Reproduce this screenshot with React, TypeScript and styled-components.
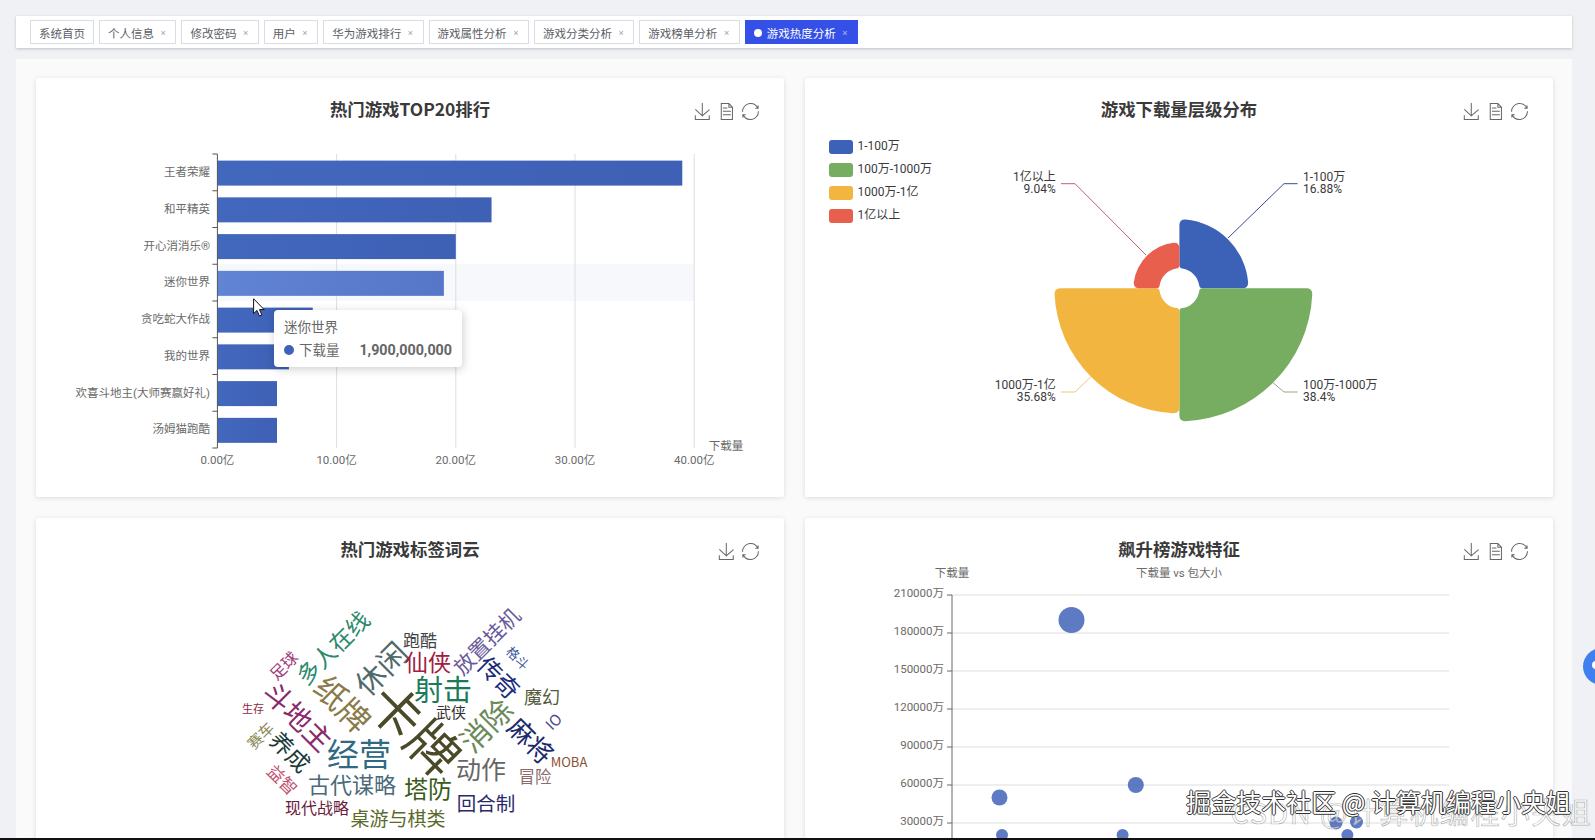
import styled, { createGlobalStyle } from "styled-components";

const FONT = `Roboto, "Noto Sans CJK SC", "Noto Sans", sans-serif`;

const GlobalStyle = createGlobalStyle`
  html, body {
    margin: 0;
    padding: 0;
    background: #eff1f4;
  }
  body {
    font-family: ${FONT};
  }
`;

const tabs = ["系统首页", "个人信息", "修改密码", "用户", "华为游戏排行", "游戏属性分析", "游戏分类分析", "游戏榜单分析", "游戏热度分析"];

const bars = [
  { name: "王者荣耀", value: 39 },
  { name: "和平精英", value: 23 },
  { name: "开心消消乐®", value: 20 },
  { name: "迷你世界", value: 19 },
  { name: "贪吃蛇大作战", value: 8 },
  { name: "我的世界", value: 6 },
  { name: "欢喜斗地主(大师赛赢好礼)", value: 5 },
  { name: "汤姆猫跑酷", value: 5 },
];

const legend = [
  { name: "1-100万", color: "#3c62b8" },
  { name: "100万-1000万", color: "#76ad60" },
  { name: "1000万-1亿", color: "#f2b640" },
  { name: "1亿以上", color: "#e85f4e" },
];

const words = [
  { t: "卡牌", x: 417, y: 727.5, s: 52, r: 45, c: "#4a4a28" },
  { t: "射击", x: 443, y: 688, s: 29, r: 0, c: "#1a7a5a" },
  { t: "经营", x: 359, y: 752, s: 32, r: 0, c: "#2f6a80" },
  { t: "休闲", x: 380, y: 667.5, s: 30, r: -45, c: "#4f6a6a" },
  { t: "纸牌", x: 344, y: 702.5, s: 32, r: 45, c: "#8a7a4a" },
  { t: "斗地主", x: 299, y: 715.5, s: 28, r: 45, c: "#8a2a6a" },
  { t: "多人在线", x: 332, y: 647, s: 23, r: -45, c: "#2a8a6a" },
  { t: "放置挂机", x: 486, y: 640.5, s: 21, r: -45, c: "#6a5a9a" },
  { t: "仙侠", x: 428, y: 661, s: 23, r: 0, c: "#a02040" },
  { t: "跑酷", x: 420, y: 639, s: 17, r: 0, c: "#444444" },
  { t: "传奇", x: 500, y: 676.5, s: 24, r: 45, c: "#1a2a7a" },
  { t: "格斗", x: 518, y: 657.5, s: 13, r: 45, c: "#3a5a9a" },
  { t: "魔幻", x: 542, y: 696, s: 18, r: 0, c: "#555a3a" },
  { t: "武侠", x: 451, y: 711, s: 15, r: 0, c: "#333333" },
  { t: "消除", x: 485, y: 724, s: 30, r: -45, c: "#6a8a5a" },
  { t: "麻将", x: 532, y: 739.5, s: 26, r: 45, c: "#1a2a6a" },
  { t: "IO", x: 553, y: 721, s: 15, r: -45, c: "#4a4a8a" },
  { t: "MOBA", x: 569, y: 761, s: 13, r: 0, c: "#8a5030" },
  { t: "动作", x: 481, y: 768, s: 25, r: 0, c: "#666666" },
  { t: "冒险", x: 535, y: 776, s: 16.5, r: 0, c: "#8a6a6a" },
  { t: "塔防", x: 428, y: 787, s: 24, r: 0, c: "#3a5a1a" },
  { t: "回合制", x: 486, y: 802, s: 19.5, r: 0, c: "#2a2a6a" },
  { t: "桌游与棋类", x: 398, y: 817, s: 19, r: 0, c: "#5a6a2a" },
  { t: "现代战略", x: 317, y: 807, s: 16, r: 0, c: "#6a1a3a" },
  { t: "古代谋略", x: 352, y: 783, s: 22, r: 0, c: "#4a6a7a" },
  { t: "益智", x: 283, y: 779, s: 17, r: 45, c: "#c05070" },
  { t: "养成", x: 291, y: 751, s: 23, r: 45, c: "#1a3a3a" },
  { t: "赛车", x: 260, y: 735, s: 15, r: -45, c: "#8a8a5a" },
  { t: "生存", x: 253, y: 708, s: 11, r: 0, c: "#8a2a4a" },
  { t: "足球", x: 283, y: 665, s: 16, r: -45, c: "#a03a7a" },
];

const points = [
  { x: 1071.5, y: 620, r: 13 },
  { x: 999.5, y: 797.5, r: 8 },
  { x: 1135.8, y: 785, r: 8 },
  { x: 1002, y: 835, r: 6 },
  { x: 1122.6, y: 835, r: 6 },
  { x: 1336, y: 823, r: 6.5 },
  { x: 1356.5, y: 822, r: 6.5 },
  { x: 1347.4, y: 835, r: 6 },
];

// ---- toolbox icons (60x60 grid)
const Tool = styled.svg`
  width: 17px;
  height: 17px;
  fill: none;
  stroke: #666;
  stroke-width: 3.6;
  display: block;
`;

const SaveIcon = () => (
  <Tool viewBox="0 0 60 60">
    <path d="M4.7,22.9L29.3,45.5L54.7,23.4M4.6,43.6L4.6,58L53.8,58L53.8,43.6M29.2,45.1L29.2,0" />
  </Tool>
);

const DataIcon = () => (
  <Tool viewBox="0 0 60 60">
    <path d="M17.5,17.3H33 M45.4,29.5h-28 M11.5,2v56H51V14.8L38.4,2H11.5z M38.4,2.2v12.7H51 M45.4,41.7h-28" />
  </Tool>
);

const RestoreIcon = () => (
  <Tool viewBox="0 0 60 60">
    <path d="M47,18.9h9.8V8.7 M56.3,20.1C52.1,9,40.5,0.6,26.8,2.1C12.6,3.7,1.6,16.2,2.1,30.6 M13,41.1H3.1v10.2 M3.7,39.9c4.2,11.1,15.8,19.5,29.5,18c14.2-1.6,25.2-14.1,24.7-28.5" />
  </Tool>
);

// ---- chart text
const AxisText = styled.text<{ $anchor?: string }>`
  font-family: ${FONT};
  font-size: 11.5px;
  fill: #6a6a6a;
  text-anchor: ${(p) => p.$anchor || "middle"};
  dominant-baseline: central;
`;

const DarkText = styled(AxisText)`
  font-size: 12px;
  fill: #3a3a3a;
`;

const Word = styled.text<{ $size: number; $color: string }>`
  font-family: "Noto Sans CJK SC", "Noto Sans", sans-serif;
  font-size: ${(p) => p.$size}px;
  fill: ${(p) => p.$color};
  text-anchor: middle;
  dominant-baseline: central;
`;

const ChartSvg = styled.svg`
  display: block;
  width: 748px;
  height: 379px;
`;

// the view boxes start at the card's place on the page, so the numbers below read as page pixels
const BarChart = () => {
  const x0 = 217.4;
  const unit = 11.92;
  const top = 154;
  const band = 36.75;
  return (
    <ChartSvg viewBox="36 118 748 379">
      <defs>
        <linearGradient id="barFill" x1="0" x2="1" y1="0" y2="0">
          <stop offset="0" stopColor="#4268be" />
          <stop offset="1" stopColor="#3e60b5" />
        </linearGradient>
        <linearGradient id="barHover" x1="0" x2="1" y1="0" y2="0">
          <stop offset="0" stopColor="#6284d4" />
          <stop offset="1" stopColor="#5676c8" />
        </linearGradient>
      </defs>
      <rect x={x0} y={top + band * 3} width={477} height={band} fill="#f6f8fb" />
      {[10, 20, 30, 40].map((v) => (
        <line key={v} x1={x0 + v * unit} x2={x0 + v * unit} y1={top} y2={448} stroke="#dedede" />
      ))}
      {bars.map((b, i) => (
        <g key={b.name}>
          <rect
            x={x0}
            y={top + band * i + 6.6}
            width={b.value * unit}
            height={25}
            fill={i === 3 ? "url(#barHover)" : "url(#barFill)"}
          />
          <AxisText x={210} y={top + band * i + 18} $anchor="end">
            {b.name}
          </AxisText>
        </g>
      ))}
      <line x1={x0} x2={x0} y1={top} y2={448} stroke="#555" />
      {bars.map((_, i) => (
        <line key={i} x1={x0 - 5} x2={x0} y1={top + band * i} y2={top + band * i} stroke="#555" />
      ))}
      <line x1={x0 - 5} x2={x0} y1={448} y2={448} stroke="#555" />
      {[0, 10, 20, 30, 40].map((v) => (
        <AxisText key={v} x={x0 + v * unit} y={460}>
          {v}.00亿
        </AxisText>
      ))}
      <AxisText x={726} y={446}>
        下载量
      </AxisText>
    </ChartSvg>
  );
};

const sector = (cx: number, cy: number, r0: number, r1: number, a0: number, a1: number, c: number, ci: number) => {
  const p = (r: number, a: number) => `${(cx + r * Math.sin(a)).toFixed(2)} ${(cy - r * Math.cos(a)).toFixed(2)}`;
  const dO = c / r1;
  const dI = ci / r0;
  return [
    `M${p(r1, a0 + dO)}`,
    `A${r1} ${r1} 0 0 1 ${p(r1, a1 - dO)}`,
    `Q${p(r1, a1)} ${p(r1 - c, a1)}`,
    `L${p(r0 + ci, a1)}`,
    `Q${p(r0, a1)} ${p(r0, a1 - dI)}`,
    `A${r0} ${r0} 0 0 0 ${p(r0, a0 + dI)}`,
    `Q${p(r0, a0)} ${p(r0 + ci, a0)}`,
    `L${p(r1 - c, a0)}`,
    `Q${p(r1, a0)} ${p(r1, a0 + dO)}Z`,
  ].join(" ");
};

const slices = [
  { r: 69, color: "#3c62b8", stroke: "#34508f", line: "1228,238 1284,183.7 1297.6,183.7", lx: 1303, ly: 177, anchor: "start", label: "1-100万", pct: "16.88%" },
  { r: 133, color: "#76ad60", stroke: "#9aa68c", line: "1273,382.7 1284,392 1297.6,392", lx: 1303, ly: 385, anchor: "start", label: "100万-1000万", pct: "38.4%" },
  { r: 125, color: "#f2b640", stroke: "#e9cc78", line: "1091,376.7 1075,392 1061,392", lx: 1055.8, ly: 385, anchor: "end", label: "1000万-1亿", pct: "35.68%" },
  { r: 46, color: "#e85f4e", stroke: "#c0606e", line: "1146,255 1075,183.7 1061,183.7", lx: 1055.8, ly: 177, anchor: "end", label: "1亿以上", pct: "9.04%" },
];

const PieChart = () => (
  <ChartSvg viewBox="805 118 748 379">
    {legend.map((l, i) => (
      <g key={l.name}>
        <rect x={829} y={140 + i * 23} width={24} height={14} rx={3} fill={l.color} />
        <DarkText x={857.5} y={145.5 + i * 23} $anchor="start">
          {l.name}
        </DarkText>
      </g>
    ))}
    {slices.map((s, i) => (
      <g key={s.label}>
        <path d={sector(1179.4, 288.3, 20, s.r, (i * Math.PI) / 2, ((i + 1) * Math.PI) / 2, 6, 3)} fill={s.color} />
        <polyline points={s.line} fill="none" stroke={s.stroke} />
        <DarkText x={s.lx} y={s.ly} $anchor={s.anchor}>
          {s.label}
        </DarkText>
        <DarkText x={s.lx} y={s.ly + 11.5} $anchor={s.anchor}>
          {s.pct}
        </DarkText>
      </g>
    ))}
  </ChartSvg>
);

const WordCloud = () => (
  <ChartSvg viewBox="36 558 748 379">
    {words.map((w) => (
      <Word key={w.t} x={w.x} y={w.y} $size={w.s} $color={w.c} transform={`rotate(${w.r} ${w.x} ${w.y})`}>
        {w.t}
      </Word>
    ))}
  </ChartSvg>
);

const ScatterChart = () => {
  const ticks = [210000, 180000, 150000, 120000, 90000, 60000, 30000];
  return (
    <ChartSvg viewBox="805 558 748 379">
      <AxisText x={952} y={573}>
        下载量
      </AxisText>
      <AxisText x={1179} y={573}>
        下载量 vs 包大小
      </AxisText>
      {ticks.map((t, i) => (
        <g key={t}>
          <line x1={952} x2={1449} y1={595 + i * 38} y2={595 + i * 38} stroke="#e9e9e9" strokeWidth={1.5} />
          <line x1={947} x2={952} y1={595 + i * 38} y2={595 + i * 38} stroke="#666" />
          <AxisText x={944} y={593 + i * 38} $anchor="end">
            {t}万
          </AxisText>
        </g>
      ))}
      <line x1={952} x2={952} y1={595} y2={900} stroke="#666" />
      {points.map((p) => (
        <circle key={p.x} cx={p.x} cy={p.y} r={p.r} fill="#3f61b8" fillOpacity={0.84} />
      ))}
    </ChartSvg>
  );
};

const Card = ({ title, compact, children }: { title: string; compact?: boolean; children: React.ReactNode }) => (
  <CardBox>
    <CardHead>
      <CardTitle>{title}</CardTitle>
      <Toolbox>
        <SaveIcon />
        {!compact && <DataIcon />}
        <RestoreIcon />
      </Toolbox>
    </CardHead>
    <ChartBody>{children}</ChartBody>
  </CardBox>
);

export default function App() {
  return (
    <Page>
      <GlobalStyle />
      <TabBar>
        {tabs.map((t, i) => (
          <Tab key={t} $active={i === tabs.length - 1}>
            {i === tabs.length - 1 && <TabDot />}
            {t}
            {i > 0 && <TabClose>×</TabClose>}
          </Tab>
        ))}
      </TabBar>
      <Main>
        <Card title="热门游戏TOP20排行">
          <BarChart />
          <Tooltip>
            <TooltipTitle>迷你世界</TooltipTitle>
            <TooltipRow>
              <TooltipDot />
              下载量
              <TooltipValue>1,900,000,000</TooltipValue>
            </TooltipRow>
          </Tooltip>
          <Cursor viewBox="0 0 12 19">
            <path d="M0.6 0.8V15.6L4 12.4L6.4 18L8.9 17L6.5 11.6H11.2Z" />
          </Cursor>
        </Card>
        <Card title="游戏下载量层级分布">
          <PieChart />
        </Card>
        <Card title="热门游戏标签词云" compact>
          <WordCloud />
        </Card>
        <Card title="飙升榜游戏特征">
          <ScatterChart />
        </Card>
      </Main>
      <FloatButton />
      <Watermark>
        <WatermarkBack>CSDN @计算机编程小央姐</WatermarkBack>
        <WatermarkFront>掘金技术社区 @ 计算机编程小央姐</WatermarkFront>
      </Watermark>
      <BottomEdge />
    </Page>
  );
}

const Page = styled.div`
  position: relative;
  display: flex;
  flex-direction: column;
  box-sizing: border-box;
  height: 840px;
  padding-top: 16px;
  overflow: hidden;
  background: #eff1f4;
`;

const TabBar = styled.div`
  display: flex;
  flex: none;
  align-items: center;
  gap: 5px;
  box-sizing: border-box;
  height: 32px;
  margin: 0 23px 0 16px;
  padding: 0 14px;
  background: #fff;
  box-shadow: 0 1px 3px rgba(0, 0, 0, 0.2);
`;

const Tab = styled.div<{ $active?: boolean }>`
  display: flex;
  align-items: center;
  box-sizing: border-box;
  height: 24px;
  padding: 1px 8px 0;
  font-family: "Noto Sans CJK SC", sans-serif;
  font-size: 11.5px;
  color: ${(p) => (p.$active ? "#fff" : "#5a5e66")};
  background: ${(p) => (p.$active ? "#3450e6" : "#fff")};
  border: 1px solid ${(p) => (p.$active ? "#3450e6" : "#d8dce5")};
`;

const TabDot = styled.span`
  width: 8px;
  height: 8px;
  margin-right: 5px;
  border-radius: 50%;
  background: #fff;
`;

const TabClose = styled.span`
  width: 8.4px;
  margin-left: 5px;
  font-family: "Liberation Sans", sans-serif;
  font-size: 9px;
  text-align: center;
  opacity: 0.6;
`;

const Main = styled.main`
  flex: 1;
  display: grid;
  grid-template-columns: 748px 748px;
  grid-auto-rows: 419px;
  gap: 21px;
  min-height: 0;
  margin: 11px 23px 0 16px;
  padding: 19px 19px 0 20px;
  overflow: hidden;
  background: #fafafa;
`;

const CardBox = styled.section`
  background: #fff;
  border-radius: 2px;
  box-shadow: 0 1px 5px rgba(0, 0, 0, 0.12);
`;

const CardHead = styled.header`
  display: grid;
  grid-template-columns: 1fr auto 1fr;
  box-sizing: border-box;
  height: 40px;
  padding: 19px 25px 0;
`;

const CardTitle = styled.h3`
  grid-column: 2;
  margin: 0;
  font-family: "Noto Sans CJK SC", sans-serif;
  font-size: 17.4px;
  font-weight: 700;
  line-height: 24px;
  color: #3a3a3a;
`;

const Toolbox = styled.div`
  grid-column: 3;
  justify-self: end;
  display: flex;
  gap: 7px;
  margin-top: 6px;
`;

const ChartBody = styled.div`
  position: relative;
  height: 379px;
`;

const Tooltip = styled.div`
  position: absolute;
  left: 238px;
  top: 192px;
  box-sizing: border-box;
  width: 188px;
  height: 57px;
  padding: 9px 10px;
  font-size: 13.5px;
  color: #666;
  background: #fff;
  border-radius: 4px;
  box-shadow: 1px 2px 10px rgba(0, 0, 0, 0.2);
`;

const TooltipTitle = styled.div`
  line-height: 16px;
`;

const TooltipRow = styled.div`
  display: flex;
  align-items: center;
  margin-top: 7px;
  line-height: 16px;
`;

const TooltipDot = styled.span`
  width: 10px;
  height: 10px;
  margin-right: 5px;
  border-radius: 50%;
  background: #3f61b8;
`;

const TooltipValue = styled.b`
  margin-left: auto;
  font-size: 14.3px;
`;

const Cursor = styled.svg`
  position: absolute;
  left: 217px;
  top: 180px;
  width: 12px;
  height: 19px;
  fill: #fff;
  stroke: #111;
  stroke-width: 1;
`;

const FloatButton = styled.div`
  position: absolute;
  right: -25px;
  top: 648px;
  width: 37px;
  height: 37px;
  border-radius: 50%;
  background: #3f7fee;
  &::after {
    content: "";
    position: absolute;
    left: 9px;
    top: 13px;
    width: 8px;
    height: 8px;
    border-radius: 50%;
    background: #fff;
  }
`;

const Watermark = styled.div`
  position: absolute;
  right: 0;
  top: 783px;
  font-family: "Noto Sans CJK SC", sans-serif;
  pointer-events: none;
`;

const WatermarkBack = styled.div`
  position: absolute;
  right: 3px;
  top: 8px;
  font-size: 29px;
  letter-spacing: 1.4px;
  line-height: 40px;
  white-space: nowrap;
  color: rgba(255, 255, 255, 0.55);
  -webkit-text-stroke: 0.7px rgba(120, 120, 120, 0.55);
`;

const WatermarkFront = styled.div`
  position: relative;
  margin-right: 24px;
  font-size: 25px;
  line-height: 36px;
  white-space: nowrap;
  color: #fff;
  text-shadow: 1px 0 0 #333, -1px 0 0 #333, 0 1px 0 #333, 0 -1px 0 #333;
`;

const BottomEdge = styled.div`
  position: absolute;
  left: 0;
  right: 0;
  bottom: 0;
  height: 2px;
  background: #111;
`;
